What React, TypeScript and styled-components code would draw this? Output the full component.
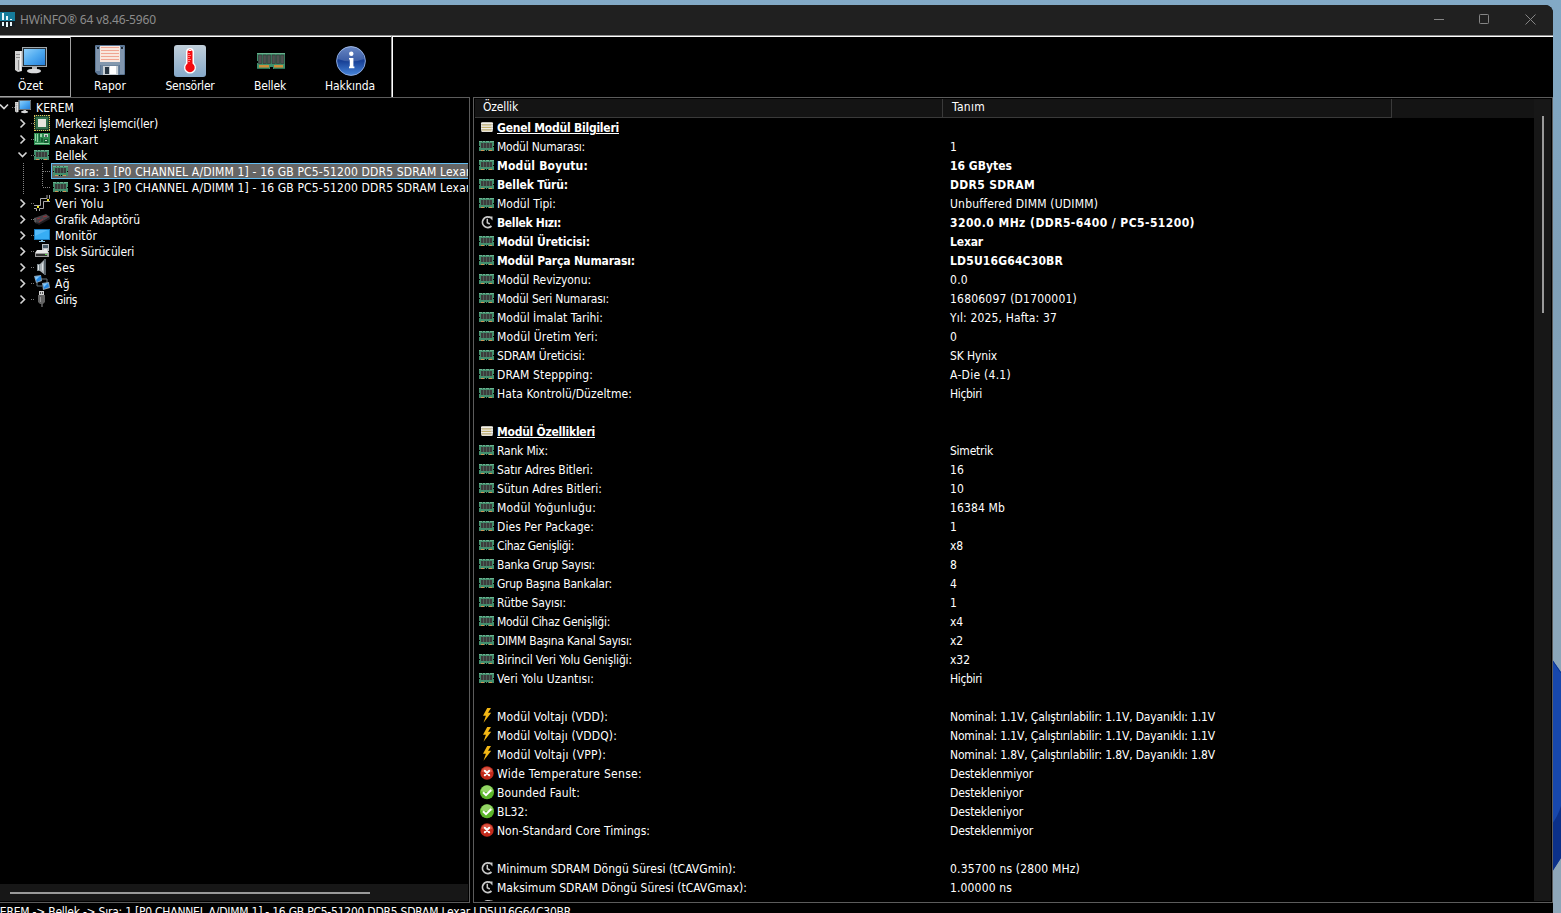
import React, { useLayoutEffect, useRef, useState } from "react";
import styled, { createGlobalStyle } from "styled-components";

const Global = createGlobalStyle`
  * { box-sizing: border-box; }
  body { margin: 0; overflow: hidden; background: #84a5bd; }
`;

const Desktop = styled.div`
  position: relative;
  width: 1561px;
  height: 913px;
  padding-top: 5px;
  overflow: hidden;
  background: linear-gradient(180deg, #82a9c6 0%, #7f9fb7 30%, #8aa6ba 60%, #8fa6b8 100%);
  font-family: "DejaVu Sans Condensed", "DejaVu Sans", sans-serif;
  font-stretch: condensed;
  font-size: 12px;
  color: #fff;
`;

const Wallpaper = styled.svg`
  position: absolute;
  right: 0;
  top: 655px;
`;

const Window = styled.div`
  position: relative;
  display: flex;
  flex-direction: column;
  width: 1553px;
  height: 908px;
  overflow: hidden;
  background: #000;
  border-top-right-radius: 8px;
`;

const TitleBar = styled.header`
  display: flex;
  align-items: center;
  flex: none;
  height: 30px;
  background: #202020;
  color: #8c8c8c;
  font-family: "Noto Sans", "Open Sans", sans-serif;
`;

const AppTitle = styled.div`
  flex: 1;
  margin-left: 5px;
  line-height: 28px;
  height: 29px;
`;

const WindowButtons = styled.svg`
  flex: none;
  margin-right: 14px;
`;

const Toolbar = styled.nav`
  display: flex;
  flex: none;
  height: 62px;
  border-top: 1px solid #8f8f8f;
  box-shadow: inset 0 1px #fff;
`;

const ToolGroup = styled.div`
  display: flex;
  width: 393px;
  height: 61px;
  padding-top: 1px;
  border-right: 1px solid #fff;
  box-shadow: inset -1px 0 #9a9a9a, inset 0 1px #fff;
`;

const ToolButton = styled.div<{ $active?: boolean }>`
  display: flex;
  flex-direction: column;
  align-items: center;
  flex: none;
  width: ${(p) => (p.$active ? 71 : 80)}px;
  height: 60px;
  padding-top: 8px;
  padding-right: ${(p) => (p.$active ? 9 : 0)}px;
  margin-right: ${(p) => (p.$active ? -1 : 0)}px;
  border-right: ${(p) => (p.$active ? "1px solid #a0a0a0" : "0")};
  border-bottom: ${(p) => (p.$active ? "1px solid #a0a0a0" : "0")};
  box-shadow: ${(p) => (p.$active ? "inset 0 1px #fff" : "none")};
  svg { flex: none; }
`;

const ToolLabel = styled.div`
  margin-top: 1px;
  line-height: 16px;
`;

const Panels = styled.main`
  display: flex;
  flex: none;
  gap: 3px;
  height: 806px;
`;

const TreePanel = styled.section`
  display: flex;
  flex-direction: column;
  width: 470px;
  height: 806px;
  padding: 1px 1px 1px 0;
  border: 1px solid #5c5c5c;
  border-left: 0;
`;

const Tree = styled.div`
  flex: 1;
  overflow: hidden;
`;

const TreeRow = styled.div`
  display: flex;
  height: 16px;
  svg { flex: none; }
`;

const TreeLabel = styled.div`
  padding-left: 5px;
  line-height: 18px;
  white-space: nowrap;
`;

const TreeItem = styled.div<{ $selected?: boolean }>`
  display: flex;
  flex: 1;
  min-width: 0;
  overflow: hidden;
  padding-left: 2px;
  background: ${(p) => (p.$selected ? "#666" : "transparent")};
  box-shadow: ${(p) => (p.$selected ? "inset 1px 1px #63bdf2, inset 0 -1px #63bdf2" : "none")};
`;

const HScroll = styled.div`
  flex: none;
  height: 17px;
  padding: 8px 0 0 10px;
  background: #171717;
`;

const HThumb = styled.div`
  width: 360px;
  height: 2px;
  background: #9a9a9a;
`;

const DetailPanel = styled.section`
  display: flex;
  width: 1080px;
  height: 806px;
  padding: 1px;
  border: 1px solid #5c5c5c;
`;

const DetailTable = styled.div`
  flex: 1;
  overflow: hidden;
`;

const HeaderRow = styled.div`
  display: flex;
  height: 19px;
  background: #141414;
`;

const HeaderCell = styled.div<{ $w: number; $pad: number }>`
  width: ${(p) => p.$w}px;
  height: 19px;
  padding-left: ${(p) => p.$pad}px;
  border-right: 1px solid #3a3a3a;
  border-bottom: 1px solid #3a3a3a;
  line-height: 16px;
`;

const Row = styled.div<{ $bold?: boolean; $title?: boolean }>`
  display: flex;
  align-items: flex-start;
  height: 19px;
  padding-left: 4px;
  font-weight: ${(p) => (p.$bold || p.$title ? 700 : 400)};
  line-height: 15px;
  white-space: nowrap;
  span {
    margin-top: 3px;
    text-decoration: ${(p) => (p.$title ? "underline" : "none")};
    text-underline-offset: 1px;
  }
  svg { flex: none; margin-top: 1px; }
`;

const Name = styled.div`
  width: 455px;
  padding-left: 2px;
`;

const VScroll = styled.div`
  width: 17px;
  padding: 17px 0 0 8px;
  background: #171717;
`;

const VThumb = styled.div`
  width: 2px;
  height: 197px;
  background: #9a9a9a;
`;

const StatusBar = styled.footer`
  height: 10px;
  margin-left: -7px;
  padding-top: 1px;
  line-height: 16px;
  white-space: nowrap;
`;

const Tracked = styled.span`
  display: inline-block;
  vertical-align: top;
  white-space: pre;
`;

/* Text whose tracking is adjusted so that it spans a given width. */
function Fit({ w, children }: { w: number; children: string }) {
  const ref = useRef<HTMLSpanElement>(null);
  const [space, setSpace] = useState(0);
  useLayoutEffect(() => {
    if (ref.current) setSpace((w - ref.current.getBoundingClientRect().width) / children.length);
  }, []);
  return (
    <Tracked ref={ref} style={{ letterSpacing: space }}>
      {children}
    </Tracked>
  );
}

const Ram = () => (
  <svg width="16" height="16" viewBox="0 0 16 16" shapeRendering="crispEdges">
    <path fill="#438f6d" d="M0 3h15v10H0z" />
    <path fill="#6bb391" d="M0 3h15v1H0z" />
    <path fill="#2f6a51" d="M3 3h1v1H3zM6 3h1v1H6zM10 3h1v1h-1z" />
    <path fill="#3b3b3b" d="M2 5h2v5H2zM5 5h2v5H5zM8 5h2v5H8zM11 5h2v5h-2z" />
    <path fill="#4d6158" d="M4 5h1v5H4zM7 5h1v5H7zM10 5h1v5h-1z" />
    <path fill="#cf9355" d="M2 12h3v1H2zM10 12h3v1h-3z" />
    <path fill="#000" d="M6 12h1v1H6zM8 12h1v1H8zM0 8h1v1H0zM14 8h1v1h-1z" />
  </svg>
);

const BigRam = () => (
  <svg width="32" height="32" viewBox="0 0 32 32">
    <path fill="#3f8f6c" d="M3 8h28v16H19v-2h-3v2H3v-6h1v-2H3z" />
    <path fill="#69b18d" d="M3 8h28v1H3z" />
    <g fill="#505251" stroke="#2e3432" strokeWidth=".6">
      {[4.5, 9, 13.2, 18, 22.4, 26.6].map((x) => (
        <path key={x} d={`M${x} 10h3.3v8.5h-3.3z`} />
      ))}
    </g>
    <path fill="#cf8e3a" d="M5 20h10v2.6H5zM20 20h9v2.6h-9z" />
    <path fill="#297052" d="M3 23h12v1H3zM20 23h11v1H20z" />
  </svg>
);

const Computer = ({ size }: { size: number }) => (
  <svg width={size} height={size} viewBox="0 0 32 32">
    <defs>
      <linearGradient id="screen" x1="0" y1="0" x2="1" y2="1">
        <stop offset="0" stopColor="#8fd0fb" />
        <stop offset=".5" stopColor="#4faaf0" />
        <stop offset="1" stopColor="#2680dc" />
      </linearGradient>
    </defs>
    <path fill="#d2d2d2" d="M0 6h7v20l-4 1-3-2z" />
    <path fill="#8c8c8c" d="M1 9h5v1H1zM1 12h5v1H1zM3 15h1v10H3z" />
    <path fill="#f4f4f4" d="M5 6h1v20H5z" />
    <path fill="#a3a9ad" d="M7 2h25v20H7z" />
    <path fill="#27323b" d="M8 3h23v18H8z" />
    <path fill="url(#screen)" d="M9 4h21v16H9z" />
    <path fill="#b6b6b6" d="M17 22h5v3h-5z" />
    <ellipse cx="19" cy="26" rx="7" ry="2.3" fill="#d9dadb" />
  </svg>
);

const Floppy = () => (
  <svg width="32" height="32" viewBox="0 0 32 32">
    <path fill="#5c7796" d="M1 1q0-1 1-1h28q1 0 1 1v28q0 1-1 1H4l-3-3z" />
    <path fill="#8196ae" d="M2 2h4v24H2zM26 2h4v27h-4z" />
    <path fill="#f8e7df" d="M6 1h20v16H6z" />
    <path stroke="#efa593" d="M7 2.5h18M7 5.5h18M7 8.5h18M7 11.5h18M7 14.5h18" />
    <path fill="#8398ae" d="M6 17h20v3H6z" />
    <path fill="#6d859e" d="M7 20h18v10H7z" />
    <path fill="#c9d0d6" d="M9 21h15v9H9z" />
    <path fill="#283643" d="M11 22h4v7h-4z" />
    <path fill="#fff" d="M16 21h6v8h-6z" />
    <path fill="#1d2935" d="M3 2h2v2H3zM27 2h2v2h-2z" />
  </svg>
);

const Thermo = () => (
  <svg width="32" height="32" viewBox="0 0 32 32">
    <defs>
      <linearGradient id="tile" x1="0" y1="0" x2="0" y2="1">
        <stop offset="0" stopColor="#c1cfda" />
        <stop offset="1" stopColor="#86a9c9" />
      </linearGradient>
    </defs>
    <rect width="32" height="32" rx="3" fill="url(#tile)" />
    <path fill="#fff" d="M12 7a4 4 0 0 1 8 0v11a6 6 0 1 1-8 0z" />
    <path fill="#f40b10" d="M13.5 7a2.5 2.5 0 0 1 5 0v11.5a4.7 4.7 0 1 1-5 0z" />
    <path fill="none" stroke="#ff9a9a" strokeWidth=".8" d="M14 8.5h2M14 10.5h3M14 12.5h2M14 14.5h3M14 16.5h2" />
    <path fill="#fff" d="M14.5 5h3v1h-3z" />
  </svg>
);

const Info = () => (
  <svg width="32" height="32" viewBox="0 0 32 32">
    <defs>
      <linearGradient id="info" x1="0" y1="0" x2="0" y2="1">
        <stop offset="0" stopColor="#4a6fb8" />
        <stop offset=".5" stopColor="#173f95" />
        <stop offset="1" stopColor="#4685da" />
      </linearGradient>
    </defs>
    <circle cx="17" cy="16" r="14.4" fill="url(#info)" stroke="#8ba8dc" strokeWidth="1" />
    <path fill="#fff" opacity=".16" d="M4 14a13 13 0 0 1 26 0q-13 5-26 0z" />
    <circle cx="17.300" cy="8.800" r="2.200" fill="#fff" />
    <path fill="#fff" d="M15 13h4.400v8.500h1v1.700h-5.400v-1.700h.8v-7H15z" />
  </svg>
);

const Clock = () => (
  <svg width="16" height="16" viewBox="0 0 16 16" fill="none" stroke="#c9c9c9">
    <path strokeWidth="1.800" d="M12.500 12A5.300 5.300 0 1 1 11 3.400" />
    <path fill="#c9c9c9" stroke="none" d="M9.500 2.500h4v4z" />
    <path strokeWidth="1.500" d="M8.300 4.700v4l2.500 1.300" />
  </svg>
);

const Chip = () => (
  <svg width="16" height="16" viewBox="0 0 16 16">
    <g transform="translate(2 2)">
      <rect y="1" width="12" height="10" rx="1.500" fill="#b5b3a8" />
      <path stroke="#f2efe8" strokeWidth="1.300" d="M0 2.500h12M0 5h12M0 7.500h12M1 10h10" />
      <path stroke="#c6a948" strokeWidth=".7" d="M1 4h9M1 6.500h9M1 9h9" />
    </g>
  </svg>
);

const Bolt = () => (
  <svg width="16" height="16" viewBox="0 0 16 16">
    <path fill="#f3b715" d="M8.200 0H12L9 4.700h3.200L4.500 14.800l2.400-7H4z" />
  </svg>
);

const Cross = () => (
  <svg width="16" height="16" viewBox="0 -0.7 16 16">
    <circle cx="8" cy="7.300" r="6.700" fill="#c22a1b" />
    <path fill="#e8735f" opacity=".6" d="M2.500 6a5.600 5.600 0 0 1 11 0q-5 2-11 0z" />
    <path stroke="#fff" strokeWidth="2" strokeLinecap="round" d="M5.800 5.100l4.400 4.400M10.200 5.100L5.800 9.500" />
  </svg>
);

const Check = () => (
  <svg width="16" height="16" viewBox="0 -0.7 16 16">
    <circle cx="8" cy="7.500" r="7" fill="#5bb52a" />
    <path fill="#b2e585" opacity=".65" d="M2 6.500a6 6 0 0 1 12 0q-6 2-12 0z" />
    <path fill="none" stroke="#fff" strokeWidth="2" d="M4 7.500l3 3 5.200-5.200" />
  </svg>
);

const Cpu = () => (
  <svg width="16" height="16" viewBox="0 0 16 16">
    <path fill="#183e28" d="M0 0h16v16H0z" />
    <path fill="none" stroke="#e2c15a" strokeDasharray="1 1" d="M0 .5h16M15.500 0v16M16 15.500H0M.5 16V0" />
    <path fill="#2f6d49" d="M2 2h12v12H2z" />
    <path fill="#e5e5dd" d="M4 4h8v8H4z" />
  </svg>
);

const Board = () => (
  <svg width="16" height="16" viewBox="0 0 16 16" shapeRendering="crispEdges">
    <path fill="#2c8b50" d="M0 2h16v12H0z" />
    <path fill="#96d4a8" d="M1 3h1v7H1zM3 3h1v8H3zM6 3h2v3H6zM1 12h14v1H1z" />
    <path fill="#175b33" d="M5 2h1v8H5zM10 8h4v4h-4zM7 7h2v4H7z" />
    <path fill="#c8d8cf" d="M10 3h4v3h-4zM11 9h2v1h-2z" />
    <path fill="#57656a" d="M11 4h2v2h-2z" />
  </svg>
);

const Bus = () => (
  <svg width="16" height="16" viewBox="0 0 16 16" fill="none" stroke="#aaa">
    <path strokeWidth="1" d="M0 10.500h6.500v-7H13V0M0 13.500h2.500V16M5.500 16v-2.500h4v-7H16M15.500 0v3.500H16" />
    <path fill="#f0e421" stroke="none" d="M3 11h2v2H3zM13 4h2v2h-2z" />
  </svg>
);

const Gpu = () => (
  <svg width="16" height="16" viewBox="0 0 16 16">
    <path fill="#454348" d="M0 7L12 3l4 3-11 7-4-1z" />
    <path fill="#211c20" d="M1 11l4 1 11-6v2L5 14z" />
    <path stroke="#9c3035" d="M3 8l3-1M9 6l4-1M5 11l4-3" />
    <path stroke="#777" d="M1 7v4" />
  </svg>
);

const Monitor = () => (
  <svg width="16" height="16" viewBox="0 0 16 16">
    <path fill="#167abf" d="M0 2h16v11H0z" />
    <path fill="#37adf4" d="M1 3h14v9H1z" />
    <path fill="#74caff" d="M1 3h13L1 9z" opacity=".5" />
    <path fill="#8cc5e2" d="M7 13h2v1h2v1H5v-1h2z" />
  </svg>
);

const Disk = () => (
  <svg width="16" height="16" viewBox="0 0 16 16">
    <path fill="#b8bec2" d="M8 1h7v7H8z" />
    <path fill="#485a67" d="M9 2h5v3H9z" />
    <path fill="#e7e7e7" d="M10 6h3v2h-3zM3 7h10l2 3H1z" />
    <path fill="#9b9b9b" d="M1 10h14v4H1z" />
    <path fill="#303030" d="M2 11h11v2H2z" />
    <path fill="#59e04a" d="M11 11h2v1h-2z" />
  </svg>
);

const Speaker = () => (
  <svg width="16" height="16" viewBox="0 0 16 16">
    <path fill="#808b91" d="M3 5h4v7H3z" />
    <path fill="#a9b1b5" d="M6 5l5-5v16l-5-4z" />
    <path fill="#59636a" d="M10 0h2v16h-2z" />
    <path fill="#dde2e5" d="M4 6h1v5H4zM8 5l1-1v8L8 11z" />
  </svg>
);

const Network = () => (
  <svg width="16" height="16" viewBox="0 0 16 16">
    <path stroke="#69767e" d="M7 4h6v5M3 7v4h5" fill="none" />
    <path fill="#8fa3b3" d="M0 1l7-1 1 6-6 2zM8 8l7-1 1 6-7 2z" />
    <path fill="#2387e1" d="M1 2l6-1v4L3 7zM9 9l5-1 1 4-5 2z" />
    <path fill="#80c7fb" d="M1 2l5-1-4 4zM9 9l5-1-4 4z" />
  </svg>
);

const Usb = () => (
  <svg width="16" height="16" viewBox="0 0 16 16">
    <path fill="#d1d1d1" d="M5 0h5v5H5z" />
    <path fill="#565656" d="M6 1h1v2H6zM8 1h1v2H8z" />
    <path fill="#626262" d="M4 4h7v7l-2 2H6l-2-2z" />
    <path fill="#969696" d="M6 6h1v5H6z" />
    <path fill="#4d4d4d" d="M7 13h2v3H7z" />
  </svg>
);

const Logo = () => (
  <svg width="15" height="16" viewBox="0 0 15 16" shapeRendering="crispEdges">
    <path fill="#167b9a" d="M0 0h14q1 0 1 1v8H0z" />
    <path fill="#151d22" d="M0 9h15v6H0z" />
    <path fill="#e9f6fa" d="M2 1h2v7H2zM6 4h2v4H6zM10 7h2v1h-2zM2 10h2v4H2zM6 10h2v5H6zM10 10h2v4h-2z" />
  </svg>
);

const Branch = ({ open }: { open?: boolean }) => (
  <svg width="34" height="16" viewBox="0 0 34 16" fill="none">
    <path stroke="#d6d6d6" strokeWidth="1.600" d={open ? "M18.500 5.500l4 4 4-4" : "M20.500 4.500l4 4-4 4"} />
    <path stroke="#777" strokeDasharray="1 1" d="M31 8.500h3" />
  </svg>
);

const LeafGuide = ({ last }: { last?: boolean }) => (
  <svg width="51" height="16" viewBox="0 0 51 16" fill="none" stroke="#858585" strokeDasharray="1 1" shapeRendering="crispEdges">
    <path d={`M23.500 0v${last ? 15 : 16}M42.500 0v${last ? 8 : 16}M43 8.500h8`} />
  </svg>
);

const leaf = (n: number) => `Sıra: ${n} [P0 CHANNEL A/DIMM 1] - 16 GB PC5-51200 DDR5 SDRAM Lexar`;

type Node = [React.FC, string, number];
const before: Node[] = [
  [Cpu, "Merkezi İşlemci(ler)", 103],
  [Board, "Anakart", 43],
  [Ram, "Bellek", 32],
];
const after: Node[] = [
  [Bus, "Veri Yolu", 49],
  [Gpu, "Grafik Adaptörü", 85],
  [Monitor, "Monitör", 42],
  [Disk, "Disk Sürücüleri", 79],
  [Speaker, "Ses", 20],
  [Network, "Ağ", 15],
  [Usb, "Giriş", 22],
];

const TreeNode = ({ node: [Icon, label, w] }: { node: Node }) => (
  <TreeRow>
    <Branch open={label === "Bellek"} />
    <Icon />
    <TreeLabel><Fit w={w}>{label}</Fit></TreeLabel>
  </TreeRow>
);

const icons: Record<string, React.FC> = { r: Ram, c: Clock, h: Chip, v: Bolt, x: Cross, y: Check };

/* icon, label, label width, value, value width, bold */
type Detail = [string, string, number, string, number, boolean?] | null;
const details: Detail[] = [
  ["h", "Genel Modül Bilgileri", 122, "", 0],
  ["r", "Modül Numarası:", 88, "1", 7],
  ["r", "Modül Boyutu:", 91, "16 GBytes", 62, true],
  ["r", "Bellek Türü:", 71, "DDR5 SDRAM", 85, true],
  ["r", "Modül Tipi:", 59, "Unbuffered DIMM (UDIMM)", 148],
  ["c", "Bellek Hızı:", 64, "3200.0 MHz (DDR5-6400 / PC5-51200)", 245, true],
  ["r", "Modül Üreticisi:", 93, "Lexar", 33, true],
  ["r", "Modül Parça Numarası:", 138, "LD5U16G64C30BR", 113, true],
  ["r", "Modül Revizyonu:", 94, "0.0", 18],
  ["r", "Modül Seri Numarası:", 112, "16806097 (D1700001)", 127],
  ["r", "Modül İmalat Tarihi:", 106, "Yıl: 2025, Hafta: 37", 107],
  ["r", "Modül Üretim Yeri:", 101, "0", 7],
  ["r", "SDRAM Üreticisi:", 88, "SK Hynix", 47],
  ["r", "DRAM Steppping:", 96, "A-Die (4.1)", 61],
  ["r", "Hata Kontrolü/Düzeltme:", 135, "Hiçbiri", 32],
  null,
  ["h", "Modül Özellikleri", 98, "", 0],
  ["r", "Rank Mix:", 51, "Simetrik", 43],
  ["r", "Satır Adres Bitleri:", 96, "16", 14],
  ["r", "Sütun Adres Bitleri:", 105, "10", 14],
  ["r", "Modül Yoğunluğu:", 99, "16384 Mb", 55],
  ["r", "Dies Per Package:", 97, "1", 7],
  ["r", "Cihaz Genişliği:", 77, "x8", 13],
  ["r", "Banka Grup Sayısı:", 98, "8", 7],
  ["r", "Grup Başına Bankalar:", 115, "4", 7],
  ["r", "Rütbe Sayısı:", 69, "1", 7],
  ["r", "Modül Cihaz Genişliği:", 113, "x4", 13],
  ["r", "DIMM Başına Kanal Sayısı:", 135, "x2", 13],
  ["r", "Birincil Veri Yolu Genişliği:", 135, "x32", 20],
  ["r", "Veri Yolu Uzantısı:", 97, "Hiçbiri", 32],
  null,
  ["v", "Modül Voltajı (VDD):", 111, "Nominal: 1.1V, Çalıştırılabilir: 1.1V, Dayanıklı: 1.1V", 265],
  ["v", "Modül Voltajı (VDDQ):", 120, "Nominal: 1.1V, Çalıştırılabilir: 1.1V, Dayanıklı: 1.1V", 265],
  ["v", "Modül Voltajı (VPP):", 109, "Nominal: 1.8V, Çalıştırılabilir: 1.8V, Dayanıklı: 1.8V", 265],
  ["x", "Wide Temperature Sense:", 145, "Desteklenmiyor", 83],
  ["y", "Bounded Fault:", 83, "Destekleniyor", 73],
  ["y", "BL32:", 31, "Destekleniyor", 73],
  ["x", "Non-Standard Core Timings:", 153, "Desteklenmiyor", 83],
  null,
  ["c", "Minimum SDRAM Döngü Süresi (tCAVGmin):", 239, "0.35700 ns (2800 MHz)", 130],
  ["c", "Maksimum SDRAM Döngü Süresi (tCAVGmax):", 250, "1.00000 ns", 62],
  ["c", "", 0, "", 0],
];

const DetailRow = ({ item }: { item: Detail }) => {
  if (!item) return <Row />;
  const [icon, label, w, value, vw, bold] = item;
  const Icon = icons[icon];
  return (
    <Row $bold={bold} $title={icon === "h"}>
      <Icon />
      <Name>{label && <Fit w={w}>{label}</Fit>}</Name>
      {value && <Fit w={vw}>{value}</Fit>}
    </Row>
  );
};

export default function App() {
  return (
    <Desktop>
      <Global />
      <Wallpaper width="9" height="220" viewBox="0 0 9 220">
        <path fill="#1747ac" d="M0 4l9 13v186l-9 14z" />
        <path fill="#0b3089" d="M0 169q6-8 9-18v52l-9 14z" />
        <path stroke="#0a3390" fill="none" d="M0 5l9 13" />
      </Wallpaper>
      <Window>
        <TitleBar>
          <Logo />
          <AppTitle><Fit w={136}>HWiNFO® 64 v8.46-5960</Fit></AppTitle>
          <WindowButtons width="110" height="30" fill="none" stroke="#858585">
            <path d="M9 14.500h10M100.500 9.500l10 10M110.500 9.500l-10 10" transform="translate(-4 0)" />
            <rect x="50.500" y="9.500" width="9" height="9" rx=".8" />
          </WindowButtons>
        </TitleBar>
        <Toolbar>
          <ToolGroup>
            <ToolButton $active>
              <Computer size={32} />
              <ToolLabel><Fit w={25}>Özet</Fit></ToolLabel>
            </ToolButton>
            <ToolButton><Floppy /><ToolLabel><Fit w={32}>Rapor</Fit></ToolLabel></ToolButton>
            <ToolButton><Thermo /><ToolLabel><Fit w={49}>Sensörler</Fit></ToolLabel></ToolButton>
            <ToolButton><BigRam /><ToolLabel><Fit w={32}>Bellek</Fit></ToolLabel></ToolButton>
            <ToolButton><Info /><ToolLabel><Fit w={50}>Hakkında</Fit></ToolLabel></ToolButton>
          </ToolGroup>
        </Toolbar>
        <Panels>
          <TreePanel>
            <Tree>
              <TreeRow>
                <svg width="15" height="16" fill="none">
                  <path stroke="#d6d6d6" strokeWidth="1.600" d="M0 5.500l4 4 4-4" />
                  <path stroke="#777" strokeDasharray="1 1" d="M12 8.500h3" />
                </svg>
                <Computer size={16} />
                <TreeLabel><Fit w={38}>KEREM</Fit></TreeLabel>
              </TreeRow>
              {before.map((n) => <TreeNode key={n[1]} node={n} />)}
              <TreeRow>
                <LeafGuide />
                <TreeItem $selected><Ram /><TreeLabel><Fit w={396.5}>{leaf(1)}</Fit></TreeLabel></TreeItem>
              </TreeRow>
              <TreeRow>
                <LeafGuide last />
                <TreeItem><Ram /><TreeLabel><Fit w={396.5}>{leaf(3)}</Fit></TreeLabel></TreeItem>
              </TreeRow>
              {after.map((n) => <TreeNode key={n[1]} node={n} />)}
            </Tree>
            <HScroll><HThumb /></HScroll>
          </TreePanel>
          <DetailPanel>
            <DetailTable>
              <HeaderRow>
                <HeaderCell $w={468} $pad={8}><Fit w={35}>Özellik</Fit></HeaderCell>
                <HeaderCell $w={449} $pad={9}><Fit w={33}>Tanım</Fit></HeaderCell>
              </HeaderRow>
              {details.map((d, i) => <DetailRow key={i} item={d} />)}
            </DetailTable>
            <VScroll><VThumb /></VScroll>
          </DetailPanel>
        </Panels>
        <StatusBar>
          <Fit w={578}>{"KEREM -> Bellek -> Sıra: 1 [P0 CHANNEL A/DIMM 1] - 16 GB PC5-51200 DDR5 SDRAM Lexar LD5U16G64C30BR"}</Fit>
        </StatusBar>
      </Window>
    </Desktop>
  );
}
